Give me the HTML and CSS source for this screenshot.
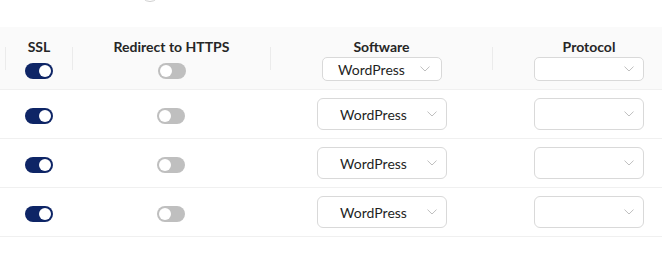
FILE: index.html
```html
<!DOCTYPE html>
<html>
<head>
<meta charset="utf-8">
<link rel="stylesheet" href="styles.css">
</head>
<body>
<div class="peek"><span class="ring"></span></div>
<div class="table">
  <div class="thead">
    <div class="th"></div>
    <div class="sep"></div>
    <div class="th">
      <div class="title">SSL</div>
      <span class="toggle on head-toggle"><span class="knob"></span></span>
    </div>
    <div class="sep"></div>
    <div class="th">
      <div class="title">Redirect to HTTPS</div>
      <span class="toggle off head-toggle"><span class="knob"></span></span>
    </div>
    <div class="sep"></div>
    <div class="th">
      <div class="title">Software</div>
      <div class="select head-select soft-head">
        <span class="value">WordPress</span>
        <svg class="arrow" width="10" height="6" viewBox="0 0 10 6"><polyline points="0.5,0.6 5,5 9.5,0.6" fill="none" stroke="#bfbfbf" stroke-width="1"/></svg>
      </div>
    </div>
    <div class="sep"></div>
    <div class="th">
      <div class="title">Protocol</div>
      <div class="select head-select proto">
        <span class="value"></span>
        <svg class="arrow" width="10" height="6" viewBox="0 0 10 6"><polyline points="0.5,0.6 5,5 9.5,0.6" fill="none" stroke="#bfbfbf" stroke-width="1"/></svg>
      </div>
    </div>
  </div>

  <div class="row">
    <div class="td"></div>
    <div class="td"><span class="toggle on"><span class="knob"></span></span></div>
    <div class="td"><span class="toggle off"><span class="knob"></span></span></div>
    <div class="td">
      <div class="select soft">
        <span class="value">WordPress</span>
        <svg class="arrow" width="10" height="6" viewBox="0 0 10 6"><polyline points="0.5,0.6 5,5 9.5,0.6" fill="none" stroke="#bfbfbf" stroke-width="1"/></svg>
      </div>
    </div>
    <div class="td">
      <div class="select proto">
        <span class="value"></span>
        <svg class="arrow" width="10" height="6" viewBox="0 0 10 6"><polyline points="0.5,0.6 5,5 9.5,0.6" fill="none" stroke="#bfbfbf" stroke-width="1"/></svg>
      </div>
    </div>
  </div>

  <div class="row">
    <div class="td"></div>
    <div class="td"><span class="toggle on"><span class="knob"></span></span></div>
    <div class="td"><span class="toggle off"><span class="knob"></span></span></div>
    <div class="td">
      <div class="select soft">
        <span class="value">WordPress</span>
        <svg class="arrow" width="10" height="6" viewBox="0 0 10 6"><polyline points="0.5,0.6 5,5 9.5,0.6" fill="none" stroke="#bfbfbf" stroke-width="1"/></svg>
      </div>
    </div>
    <div class="td">
      <div class="select proto">
        <span class="value"></span>
        <svg class="arrow" width="10" height="6" viewBox="0 0 10 6"><polyline points="0.5,0.6 5,5 9.5,0.6" fill="none" stroke="#bfbfbf" stroke-width="1"/></svg>
      </div>
    </div>
  </div>

  <div class="row">
    <div class="td"></div>
    <div class="td"><span class="toggle on"><span class="knob"></span></span></div>
    <div class="td"><span class="toggle off"><span class="knob"></span></span></div>
    <div class="td">
      <div class="select soft">
        <span class="value">WordPress</span>
        <svg class="arrow" width="10" height="6" viewBox="0 0 10 6"><polyline points="0.5,0.6 5,5 9.5,0.6" fill="none" stroke="#bfbfbf" stroke-width="1"/></svg>
      </div>
    </div>
    <div class="td">
      <div class="select proto">
        <span class="value"></span>
        <svg class="arrow" width="10" height="6" viewBox="0 0 10 6"><polyline points="0.5,0.6 5,5 9.5,0.6" fill="none" stroke="#bfbfbf" stroke-width="1"/></svg>
      </div>
    </div>
  </div>
</div>
</body>
</html>
```

FILE: styles.css
```css
* { box-sizing: border-box; }
html, body { margin: 0; padding: 0; background: #ffffff; }
body {
  font-family: Lato, "Open Sans", sans-serif;
  font-size: 14px;
  color: #1f1f1f;
  width: 662px;
  overflow: hidden;
}

.peek {
  height: 27px;
  overflow: hidden;
}
.ring {
  display: block;
  width: 20px;
  height: 20px;
  margin-left: 140px;
  margin-top: -18px;
  border: 1px solid #cfcfcf;
  border-radius: 50%;
}

.table {
  width: 685px;
}

.thead {
  display: grid;
  grid-template-columns: 5px 1px 66px 1px 197px 1px 221px 1px 192px;
  background: #fafafa;
  border-bottom: 1px solid #f0f0f0;
  padding: 10px 0 8px;
}
.sep {
  width: 1px;
  height: 23px;
  background: #ebebeb;
  align-self: start;
  margin-top: 10px;
}
.th {
  display: flex;
  flex-direction: column;
  align-items: center;
}
.title {
  font-weight: 700;
  line-height: 20px;
  height: 20px;
  color: #262626;
  white-space: nowrap;
}

.row {
  display: grid;
  grid-template-columns: 5px 67px 198px 222px 193px;
  border-bottom: 1px solid #f0f0f0;
  padding: 8px 0;
}
.td {
  display: flex;
  align-items: center;
  justify-content: center;
}

.toggle {
  display: flex;
  width: 28px;
  height: 16px;
  border-radius: 8px;
  padding: 2px;
  margin-top: 4px;
}
.toggle.on { background: #0e2566; justify-content: flex-end; }
.toggle.off { background: #bfbfbf; justify-content: flex-start; }
.head-toggle { margin-top: 6px; }
.knob {
  width: 12px;
  height: 12px;
  border-radius: 50%;
  background: #ffffff;
}

.select {
  display: flex;
  align-items: center;
  height: 32px;
  width: 130px;
  border: 1px solid #d9d9d9;
  border-radius: 6px;
  background: #ffffff;
  padding: 0 9px 0 11px;
  margin-left: 1px;
}
.select .value {
  flex: 1;
  text-align: center;
  color: #1f1f1f;
  white-space: nowrap;
  margin-right: 8px;
}
.select .arrow { display: block; flex: none; }
.select.proto { width: 110px; margin-left: 0; }
.head-select {
  height: 24px;
  border-radius: 5px;
}
.soft-head {
  width: 120px;
  padding-right: 11px;
}
.soft-head .value { margin-right: 11px; }
```
